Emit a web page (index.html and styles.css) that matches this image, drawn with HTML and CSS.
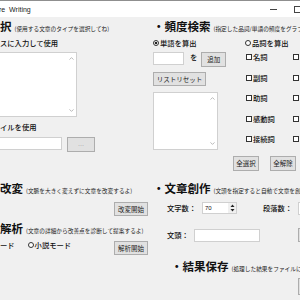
FILE: index.html
```html
<!DOCTYPE html>
<html lang="ja">
<head>
<meta charset="utf-8">
<title>Writing</title>
<link rel="stylesheet" href="styles.css">
</head>
<body>
<div class="win">
  <header class="titlebar">
    <span class="title">re  Writing</span>
    <span class="ctrls"><span class="min"></span><span class="max"></span></span>
  </header>
  <main class="content">
    <section class="col left">
      <div class="sec-head"><span class="h">択</span><span class="note">(使用する文章のタイプを選択してね)</span></div>
      <div class="label l1">スに入力して使用</div>
      <div class="box textarea">
        <div class="vscroll">
          <svg width="5" height="3" viewBox="0 0 5 3"><polyline points="0.5,2.6 2.5,0.6 4.5,2.6" fill="none" stroke="#a8a8a8" stroke-width="0.8"/></svg>
          <svg width="5" height="3" viewBox="0 0 5 3"><polyline points="0.5,0.4 2.5,2.4 4.5,0.4" fill="none" stroke="#a8a8a8" stroke-width="0.8"/></svg>
        </div>
      </div>
      <div class="label l2">イルを使用</div>
      <div class="file-row"><div class="box field file"></div><button class="btn dots">···</button></div>
      <div class="sec-head h-kaihen"><span class="h">改変</span><span class="note">(文脈を大きく変えずに文章を改変するよ)</span></div>
      <button class="btn act act1">改変開始</button>
      <div class="sec-head h-kaiseki"><span class="h">解析</span><span class="note">(文章の詳細から改善点を診断して提案するよ)</span></div>
      <div class="mode-row">
        <span class="label small">ード</span>
        <span class="label small novel"><span class="radio"></span>小説モード</span>
        <button class="btn act">解析開始</button>
      </div>
    </section>
    <section class="col right">
      <div class="sec-head"><span class="h">・頻度検索</span><span class="note">(指定した品詞/単語の頻度をグラフで表示するよ)</span></div>
      <div class="freq">
        <div class="freq-a">
          <div class="label opt"><span class="radio on"></span>単語を算出</div>
          <div class="word-row"><div class="box field word"></div><span class="label wo">を</span><button class="btn add">追加</button></div>
          <button class="btn reset">リストリセット</button>
          <div class="box listbox">
            <div class="vscroll">
              <svg width="5" height="3" viewBox="0 0 5 3"><polyline points="0.5,2.6 2.5,0.6 4.5,2.6" fill="none" stroke="#a8a8a8" stroke-width="0.8"/></svg>
              <svg width="5" height="3" viewBox="0 0 5 3"><polyline points="0.5,0.4 2.5,2.4 4.5,0.4" fill="none" stroke="#a8a8a8" stroke-width="0.8"/></svg>
            </div>
          </div>
        </div>
        <div class="freq-b">
          <div class="label opt"><span class="radio"></span>品詞を算出</div>
          <div class="pos-grid">
            <span class="label"><span class="chk"></span>名詞</span><span class="label"><span class="chk"></span>動詞</span>
            <span class="label"><span class="chk"></span>副詞</span><span class="label"><span class="chk"></span>形容詞</span>
            <span class="label"><span class="chk"></span>助詞</span><span class="label"><span class="chk"></span>助動詞</span>
            <span class="label"><span class="chk"></span>感動詞</span><span class="label"><span class="chk"></span>連体詞</span>
            <span class="label"><span class="chk"></span>接続詞</span><span class="label"><span class="chk"></span>記号</span>
          </div>
        </div>
      </div>
      <div class="sel-row"><button class="btn sel">全選択</button><button class="btn sel">全解除</button></div>
      <div class="sec-head h-create"><span class="h">・文章創作</span><span class="note">(文頭を指定すると自動で文章を創作するよ)</span></div>
      <div class="gen-row r1">
        <span class="label lab1">文字数：</span>
        <div class="box field spin"><span class="num">70</span>
          <span class="spinbtn"><svg width="7" height="10" viewBox="0 0 7 10"><polygon points="3.5,1.5 5.5,4 1.5,4" fill="#222"/><polygon points="1.5,6 5.5,6 3.5,8.5" fill="#222"/></svg></span>
        </div>
        <span class="label lab2">段落数：</span>
        <div class="box field edge"></div>
      </div>
      <div class="gen-row r2">
        <span class="label lab3">文頭：</span>
        <div class="box field head"></div>
        <button class="btn edge2"></button>
      </div>
      <div class="sec-head save"><span class="h">・結果保存</span><span class="note">(処理した結果をファイルに保存するよ)</span></div>
      <button class="btn edge3"></button>
    </section>
  </main>
</div>
</body>
</html>
```

FILE: styles.css
```css
* { box-sizing: border-box; margin: 0; padding: 0; }
html, body { width: 300px; height: 300px; overflow: hidden; }
body {
  background: #f0f0f0;
  font-family: "Noto Sans CJK JP", "Noto Sans CJK SC", sans-serif;
  color: #111;
}
.win { width: 300px; height: 300px; overflow: hidden; }

.titlebar {
  height: 17px;
  background: #fff;
  border-top: 1px solid #8f8f8f;
  display: flex;
  align-items: center;
  justify-content: space-between;
  font-family: "Liberation Sans", Arial, sans-serif;
  font-size: 7px;
  color: #222;
}
.title { white-space: pre; margin-left: -1px; }
.ctrls { display: flex; align-items: center; gap: 17px; margin-right: -1px; }
.min { width: 7px; height: 1px; background: #444; }
.max { width: 7px; height: 7px; border: 1px solid #444; }

.content { display: flex; height: 283px; overflow: hidden; }
.col { flex: none; width: 150px; display: flex; flex-direction: column; align-items: flex-start; }
.right { padding-left: 3px; }

.sec-head { display: flex; align-items: baseline; white-space: nowrap; height: 14px; margin-top: 2px; }
.h { font-size: 11.5px; font-weight: 700; line-height: 14px; color: #111; }
.note { font-size: 5.7px; line-height: 8px; margin-left: 3px; color: #222; }

.label {
  font-size: 7.3px;
  line-height: 10px;
  height: 10px;
  white-space: nowrap;
  display: flex;
  align-items: center;
  font-weight: 500;
}
.l1 { margin-top: 5px; }
.l2 { margin-top: 5px; }

.box { background: #fff; border: 1px solid #d0d0d0; }
.textarea { margin-top: 4px; width: 77px; height: 65px; border-left-width: 0; display: flex; justify-content: flex-end; }
.vscroll {
  width: 9px; height: 100%;
  display: flex; flex-direction: column; justify-content: space-between; align-items: center;
  padding: 4px 0;
}

.btn {
  font-family: inherit;
  font-size: 6.5px;
  line-height: 1;
  color: #222;
  background: #e1e1e1;
  border: 1px solid #adadad;
  display: flex; align-items: center; justify-content: center;
  white-space: nowrap;
}

.file-row { display: flex; align-items: flex-start; margin-top: 5px; }
.file { width: 62px; height: 13px; border-left-width: 0; }
.dots { margin-left: 5px; width: 28px; height: 15px; color: #777; font-size: 6px; font-family: "Liberation Sans", Arial, sans-serif; }

.h-kaihen { margin-top: 29px; }
.act { width: 34px; height: 14px; }
.act1 { align-self: flex-end; margin-right: 2px; margin-top: 7px; }
.h-kaiseki { margin-top: 5px; }
.mode-row { display: flex; align-items: flex-start; width: 148px; margin-top: 6px; }
.small { height: 8px; line-height: 8px; }
.novel { margin-left: 13px; }
.mode-row .act { margin-left: auto; }

.radio {
  width: 6px; height: 6px; border: 1px solid #333; border-radius: 50%;
  background: #fff; margin-right: 1px; flex: none;
}
.radio.on { background: radial-gradient(circle, #222 0 1.4px, #fff 1.6px); }
.chk { width: 6px; height: 6px; border: 1px solid #333; background: #fff; margin-right: 1px; flex: none; }

.freq { display: flex; height: 117px; }
.freq-a { width: 92px; display: flex; flex-direction: column; align-items: flex-start; }
.opt { margin-top: 5px; }
.word-row { display: flex; align-items: flex-start; margin-top: 4px; }
.word { width: 31px; height: 13px; }
.wo { margin-left: 6px; }
.add { margin-left: 4px; width: 25px; height: 15px; }
.reset { margin-top: 5px; width: 53px; height: 14px; }
.listbox { margin-top: 6px; width: 65px; height: 58px; display: flex; justify-content: flex-end; }

.freq-b { display: flex; flex-direction: column; align-items: flex-start; }
.pos-grid {
  margin-top: 4px; margin-left: 1px;
  display: grid;
  grid-template-columns: 47px 47px;
  grid-template-rows: repeat(4, 20.5px) 10px;
}

.sel-row { display: flex; gap: 11px; margin-top: 6px; padding-left: 80px; }
.sel { width: 26px; height: 15px; }

.h-create { margin-top: 10px; }
.gen-row { display: flex; align-items: center; padding-left: 14px; }
.r1 { margin-top: 7px; height: 12px; }
.lab1 { width: 35px; }
.spin { width: 35px; height: 12px; display: flex; justify-content: space-between; align-items: center; }
.num { font-family: "Liberation Sans", Arial, sans-serif; font-size: 6px; padding-left: 2px; }
.spinbtn { width: 8px; height: 10px; display: flex; align-items: center; justify-content: center; background: #f0f0f0; }
.lab2 { width: 35px; margin-left: 26px; }
.edge { width: 20px; height: 13px; }
.r2 { margin-top: 14px; height: 14px; }
.lab3 { width: 27px; }
.head { width: 66px; height: 13px; }
.edge2 { margin-left: 38px; width: 20px; height: 14px; }
.save { margin-top: 17px; margin-left: 18px; }
.edge3 { margin-top: 5px; margin-left: 145px; width: 20px; height: 17px; }
```
